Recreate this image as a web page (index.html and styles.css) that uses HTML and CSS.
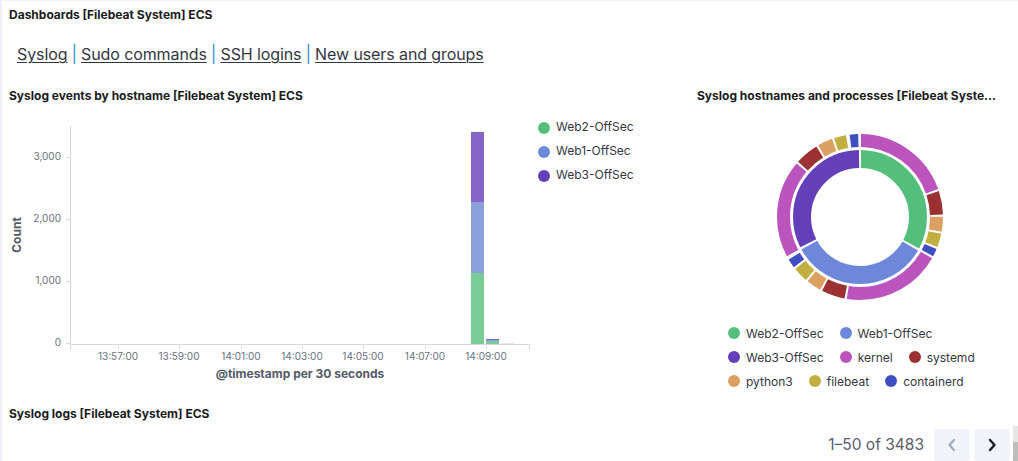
FILE: index.html
```html
<!DOCTYPE html>
<html lang="en">
<head>
<meta charset="utf-8">
<title>Dashboards [Filebeat System] ECS</title>
<link rel="stylesheet" href="styles.css">
</head>
<body>
<div class="page">
  <h1 class="panel-title">Dashboards [Filebeat System] ECS</h1>
  <nav class="links">
    <a href="#">Syslog</a><span class="sep">|</span><a href="#">Sudo commands</a><span class="sep">|</span><a href="#">SSH logins</a><span class="sep">|</span><a href="#">New users and groups</a>
  </nav>

  <section class="charts">
    <div class="panel bar-panel">
      <h2 class="panel-title">Syslog events by hostname [Filebeat System] ECS</h2>
      <svg class="bar-chart" width="680" height="285" viewBox="0 105 680 285">
        <g class="axis">
          <line x1="68.5" y1="125" x2="68.5" y2="344"/>
          <line x1="68" y1="343.5" x2="528" y2="343.5"/>
          <line x1="64" y1="156.5" x2="68" y2="156.5"/>
          <line x1="64" y1="218.5" x2="68" y2="218.5"/>
          <line x1="64" y1="280.5" x2="68" y2="280.5"/>
          <line x1="64" y1="342.5" x2="68" y2="342.5"/>
          <line x1="68.5" y1="343" x2="68.5" y2="348"/>
          <line x1="116.5" y1="343" x2="116.5" y2="348"/>
          <line x1="177.5" y1="343" x2="177.5" y2="348"/>
          <line x1="239.5" y1="343" x2="239.5" y2="348"/>
          <line x1="300.5" y1="343" x2="300.5" y2="348"/>
          <line x1="361.5" y1="343" x2="361.5" y2="348"/>
          <line x1="423.5" y1="343" x2="423.5" y2="348"/>
          <line x1="484.5" y1="343" x2="484.5" y2="348"/>
          <line x1="527.5" y1="343" x2="527.5" y2="348"/>
        </g>
        <g class="tick-labels y-labels">
          <text x="59" y="156">3,000</text>
          <text x="59" y="218">2,000</text>
          <text x="59" y="280">1,000</text>
          <text x="59" y="342">0</text>
        </g>
        <g class="tick-labels x-labels">
          <text x="116" y="356">13:57:00</text>
          <text x="177" y="356">13:59:00</text>
          <text x="239" y="356">14:01:00</text>
          <text x="300" y="356">14:03:00</text>
          <text x="361" y="356">14:05:00</text>
          <text x="423" y="356">14:07:00</text>
          <text x="484" y="356">14:09:00</text>
        </g>
        <g class="bars">
          <rect x="469" y="272" width="13" height="71" fill="#78cd97"/>
          <rect x="469" y="201" width="13" height="71" fill="#8b9fdd"/>
          <rect x="469" y="131" width="13" height="70" fill="#8566c8"/>
          <rect x="484" y="340" width="13" height="3" fill="#78cd97"/>
          <rect x="484" y="339" width="13" height="1" fill="#8b9fdd"/>
          <rect x="484" y="338" width="13" height="1" fill="#8566c8"/>
          <rect x="499" y="342" width="13" height="1" fill="#e3e6ef"/>
        </g>
        <text class="axis-title" transform="translate(19 234) rotate(-90)">Count</text>
        <text class="axis-title" x="298" y="377">@timestamp per 30 seconds</text>
        <g class="chart-legend">
          <circle cx="542" cy="127" r="6" fill="#54bf7c"/>
          <text x="554" y="127">Web2-OffSec</text>
          <circle cx="542" cy="151" r="6" fill="#6e88d9"/>
          <text x="554" y="151">Web1-OffSec</text>
          <circle cx="542" cy="175" r="6" fill="#643fba"/>
          <text x="554" y="175">Web3-OffSec</text>
        </g>
      </svg>
    </div>

    <div class="panel pie-panel">
      <h2 class="panel-title clip" title="Syslog hostnames and processes [Filebeat System] ECS">Syslog hostnames and processes [Filebeat Syste…</h2>
      <svg class="donut" width="180" height="180" viewBox="-90 -90 180 180">
        <g transform="rotate(-90)" fill="none">
          <!-- inner ring: hostnames -->
          <circle r="58" stroke-width="18" pathLength="360" stroke="#54bf7c" stroke-dasharray="117 400" stroke-dashoffset="-1"/>
          <circle r="58" stroke-width="18" pathLength="360" stroke="#6e88d9" stroke-dasharray="121 400" stroke-dashoffset="-120"/>
          <circle r="58" stroke-width="18" pathLength="360" stroke="#643fba" stroke-dasharray="116 400" stroke-dashoffset="-243"/>
          <!-- outer ring: processes (Web2) -->
          <circle r="76.5" stroke-width="13" pathLength="360" stroke="#bb55bd" stroke-dasharray="69.5 400" stroke-dashoffset="-0.75"/>
          <circle r="76.5" stroke-width="13" pathLength="360" stroke="#9c3133" stroke-dasharray="16.5 400" stroke-dashoffset="-71.75"/>
          <circle r="76.5" stroke-width="13" pathLength="360" stroke="#dca062" stroke-dasharray="10.5 400" stroke-dashoffset="-89.75"/>
          <circle r="76.5" stroke-width="13" pathLength="360" stroke="#c1af40" stroke-dasharray="9.5 400" stroke-dashoffset="-101.75"/>
          <circle r="76.5" stroke-width="13" pathLength="360" stroke="#3f4fc2" stroke-dasharray="5.5 400" stroke-dashoffset="-112.75"/>
          <!-- Web1 -->
          <circle r="76.5" stroke-width="13" pathLength="360" stroke="#bb55bd" stroke-dasharray="69.5 400" stroke-dashoffset="-119.75"/>
          <circle r="76.5" stroke-width="13" pathLength="360" stroke="#9c3133" stroke-dasharray="16.5 400" stroke-dashoffset="-190.75"/>
          <circle r="76.5" stroke-width="13" pathLength="360" stroke="#dca062" stroke-dasharray="10.5 400" stroke-dashoffset="-208.75"/>
          <circle r="76.5" stroke-width="13" pathLength="360" stroke="#c1af40" stroke-dasharray="10.5 400" stroke-dashoffset="-220.75"/>
          <circle r="76.5" stroke-width="13" pathLength="360" stroke="#3f4fc2" stroke-dasharray="6.5 400" stroke-dashoffset="-232.75"/>
          <!-- Web3 -->
          <circle r="76.5" stroke-width="13" pathLength="360" stroke="#bb55bd" stroke-dasharray="68.5 400" stroke-dashoffset="-241.75"/>
          <circle r="76.5" stroke-width="13" pathLength="360" stroke="#9c3133" stroke-dasharray="16.5 400" stroke-dashoffset="-311.75"/>
          <circle r="76.5" stroke-width="13" pathLength="360" stroke="#dca062" stroke-dasharray="10.5 400" stroke-dashoffset="-329.75"/>
          <circle r="76.5" stroke-width="13" pathLength="360" stroke="#c1af40" stroke-dasharray="8.5 400" stroke-dashoffset="-341.75"/>
          <circle r="76.5" stroke-width="13" pathLength="360" stroke="#3f4fc2" stroke-dasharray="6 400" stroke-dashoffset="-352.75"/>
        </g>
      </svg>
      <ul class="legend">
        <li><span class="dot web2"></span>Web2-OffSec</li>
        <li><span class="dot web1"></span>Web1-OffSec</li>
        <li><span class="dot web3"></span>Web3-OffSec</li>
        <li><span class="dot kernel"></span>kernel</li>
        <li><span class="dot systemd"></span>systemd</li>
        <li><span class="dot python3"></span>python3</li>
        <li><span class="dot filebeat"></span>filebeat</li>
        <li><span class="dot containerd"></span>containerd</li>
      </ul>
    </div>
  </section>

  <section class="logs">
    <h2 class="panel-title">Syslog logs [Filebeat System] ECS</h2>
    <div class="pager">
      <span class="count">1–50 of 3483</span>
      <button class="page-btn prev" aria-label="Previous page">
        <svg width="12" height="14" viewBox="0 0 12 14"><path d="M8 2 L3.5 7 L8 12" fill="none" stroke="#a2abba" stroke-width="2.2" stroke-linecap="round" stroke-linejoin="round"/></svg>
      </button>
      <button class="page-btn next" aria-label="Next page">
        <svg width="12" height="14" viewBox="0 0 12 14"><path d="M4 2 L8.5 7 L4 12" fill="none" stroke="#1a1c21" stroke-width="2.4" stroke-linecap="round" stroke-linejoin="round"/></svg>
      </button>
      <span class="scroll-strip"></span>
    </div>
  </section>
</div>
</body>
</html>
```

FILE: styles.css
```css
html, body {
  margin: 0;
  padding: 0;
  height: 100%;
  overflow: hidden;
  background: #ffffff;
}

body {
  font-family: Inter, "Liberation Sans", Arial, sans-serif;
  color: #1a1c21;
}

.page {
  box-sizing: border-box;
  height: 461px;
  border-left: 2px solid #eef0f6;
  border-top: 1px solid #f3f4f7;
}

.panel-title {
  margin: 0;
  font-size: 12px;
  font-weight: 700;
  line-height: 14px;
  color: #1a1c21;
  padding-left: 7px;
}

.page > .panel-title {
  padding-top: 7px;
}

.links {
  margin-top: 20px;
  padding-left: 15px;
  font-size: 16px;
  line-height: 24px;
  display: flex;
  align-items: center;
}

.links a {
  color: #343741;
  text-decoration: underline;
  text-underline-offset: 2px;
  text-decoration-thickness: 1px;
  letter-spacing: -0.1px;
}

.links .sep {
  color: #3d8fdc;
  margin: 0 4px;
  font-size: 17px;
}

.charts {
  display: flex;
  margin-top: 23px;
}

.bar-panel {
  width: 688px;
  flex: none;
}

.bar-chart {
  display: block;
  margin-top: 3px;
}

.axis line {
  stroke: #d3dae6;
  stroke-width: 1;
}

.tick-labels text {
  font-size: 10px;
  fill: #69707d;
  dominant-baseline: middle;
}

.y-labels text {
  text-anchor: end;
}

.x-labels text {
  text-anchor: middle;
}

.axis-title {
  font-size: 12px;
  font-weight: 700;
  fill: #535966;
  text-anchor: middle;
}

.chart-legend text {
  font-size: 12px;
  fill: #343741;
  dominant-baseline: middle;
}

.pie-panel {
  flex: 1;
  min-width: 0;
}

.clip {
  width: 300px;
  white-space: nowrap;
  overflow: hidden;
}

.donut {
  display: block;
  margin-top: 24px;
  margin-left: 80px;
}

.legend {
  list-style: none;
  margin: 14px 0 0 38px;
  padding: 0;
  width: 270px;
  display: flex;
  flex-wrap: wrap;
  column-gap: 16px;
}

.legend li {
  display: flex;
  align-items: center;
  height: 24px;
  font-size: 12px;
  color: #343741;
}

.dot {
  width: 12px;
  height: 12px;
  border-radius: 50%;
  margin-right: 6px;
  flex: none;
}

.dot.web2 { background: #54bf7c; }
.dot.web1 { background: #6e88d9; }
.dot.web3 { background: #643fba; }
.dot.kernel { background: #bb55bd; }
.dot.systemd { background: #9c3133; }
.dot.python3 { background: #dca062; }
.dot.filebeat { background: #c1af40; }
.dot.containerd { background: #3f4fc2; }

.logs {
  margin-top: 14px;
}

.pager {
  margin-top: 8px;
  display: flex;
  justify-content: flex-end;
  align-items: flex-start;
  gap: 4px;
}

.count {
  font-size: 15.5px;
  line-height: 32px;
  color: #5a606d;
  margin-right: 6px;
}

.page-btn {
  width: 36px;
  height: 32px;
  border: none;
  border-radius: 4px;
  background: #f1f4f9;
  padding: 0;
  display: flex;
  align-items: center;
  justify-content: center;
}

.scroll-strip {
  width: 5px;
  height: 40px;
  margin-left: -1px;
  margin-top: -3px;
  background: linear-gradient(to bottom, #e6e6e6 0 16px, #bdbdbd 16px);
}
```
